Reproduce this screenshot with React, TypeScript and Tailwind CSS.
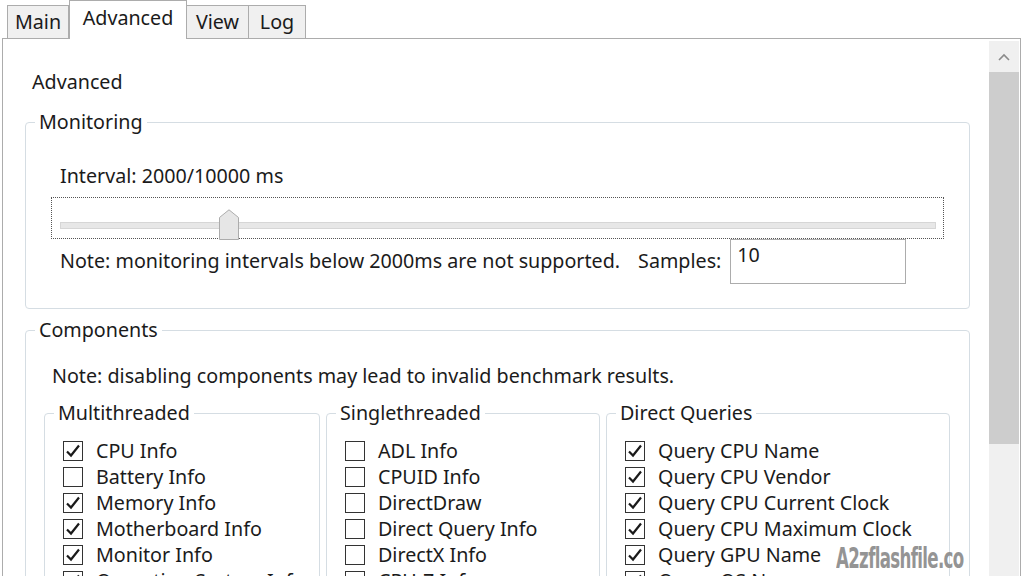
import React from "react";

const FONT = { fontFamily: '"Noto Sans", "Open Sans", "Liberation Sans", sans-serif' };

function Check({ checked }: { checked: boolean }) {
  return (
    <span className="w-[20px] h-[20px] border border-[#333333] bg-white flex items-center justify-center shrink-0">
      {checked && (
        <svg width="16" height="16" viewBox="0 0 16 16">
          <path d="M2 8.5 L6 12.5 L14 2.5" stroke="#1a1a1a" strokeWidth="2.2" fill="none" />
        </svg>
      )}
    </span>
  );
}

function Row({ label, checked }: { label: string; checked: boolean }) {
  return (
    <div className="flex items-center h-[26px] gap-[13px]">
      <Check checked={checked} />
      <span className="whitespace-nowrap">{label}</span>
    </div>
  );
}

function SubGroup({ title, width, items }: { title: string; width: string; items: [string, boolean][] }) {
  return (
    <fieldset className={`${width} border border-[#d5dde3] rounded-[4px] shrink-0`}>
      <legend className="ml-[9px] px-[4px] leading-[26px]">{title}</legend>
      <div className="pl-[18px] pt-[12px] pb-[10px]">
        {items.map(([l, c]) => (
          <Row key={l} label={l} checked={c} />
        ))}
      </div>
    </fieldset>
  );
}

export default function App() {
  return (
    <div className="w-[1024px] h-[576px] overflow-hidden bg-white relative text-[19.7px] text-[#1b1b1b]" style={FONT}>
      <div className="flex items-end h-[38px] pl-[7px] relative z-10">
        <div className="w-[62px] h-[33px] bg-[#f0f0f0] border border-[#acacac] border-b-0 flex items-center justify-center">Main</div>
        <div className="w-[118px] h-[39px] mb-[-1px] bg-white border border-[#acacac] border-b-0 flex items-center justify-center pb-[4px]">Advanced</div>
        <div className="w-[62px] h-[33px] bg-[#f0f0f0] border border-[#acacac] border-b-0 border-l-0 flex items-center justify-center">View</div>
        <div className="w-[57px] h-[33px] bg-[#f0f0f0] border border-[#acacac] border-b-0 border-l-0 flex items-center justify-center">Log</div>
      </div>
      <div className="ml-[2px] w-[1019px] h-[600px] border-l border-t border-r border-[#acacac] flex">
        <div className="flex-1 pl-[22px] pt-[29px]">
          <div className="ml-[7px] leading-[28px]">Advanced</div>
          <fieldset className="mt-[13px] w-[945px] border border-[#d5dde3] rounded-[4px]">
            <legend className="ml-[9px] px-[4px] leading-[26px]">Monitoring</legend>
            <div className="pl-[34px] pr-[25px] pb-[24px]">
              <div className="mt-[28px] leading-[26px]">Interval: 2000/10000 ms</div>
              <div className="mt-[8px] ml-[-9px] w-[893px] h-[42px] border border-dotted border-[#555555] relative">
                <div className="absolute left-[8px] right-[7px] top-[24px] h-[7px] bg-[#e7e7e7] border border-[#d6d6d6]" />
                <svg className="absolute left-[167px] top-[11px]" width="20" height="31" viewBox="0 0 20 31">
                  <path d="M0.5 30.5 L0.5 8.5 L10 0.8 L19.5 8.5 L19.5 30.5 Z" fill="#e6e6e6" stroke="#acacac" />
                </svg>
              </div>
              <div className="flex items-center h-[46px] mt-[-1px]">
                <span className="whitespace-nowrap">Note: monitoring intervals below 2000ms are not supported.</span>
                <span className="ml-[18px] whitespace-nowrap">Samples:</span>
                <div className="ml-[9px] w-[176px] h-[45px] border border-[#acacac] px-[6px] pt-[4px] leading-[22px] self-end">10</div>
              </div>
            </div>
          </fieldset>
          <fieldset className="mt-[8px] w-[945px] border border-[#d5dde3] rounded-[4px]">
            <legend className="ml-[9px] px-[4px] leading-[26px]">Components</legend>
            <div className="pl-[18px] pr-[18px] pb-[20px]">
              <div className="mt-[20px] ml-[8px] leading-[26px]">Note: disabling components may lead to invalid benchmark results.</div>
              <div className="mt-[11px] flex gap-[6px]">
                <SubGroup
                  title="Multithreaded"
                  width="w-[276px]"
                  items={[
                    ["CPU Info", true],
                    ["Battery Info", false],
                    ["Memory Info", true],
                    ["Motherboard Info", true],
                    ["Monitor Info", true],
                    ["Operating System Info", true],
                  ]}
                />
                <SubGroup
                  title="Singlethreaded"
                  width="w-[274px]"
                  items={[
                    ["ADL Info", false],
                    ["CPUID Info", false],
                    ["DirectDraw", false],
                    ["Direct Query Info", false],
                    ["DirectX Info", false],
                    ["CPU-Z Info", false],
                  ]}
                />
                <SubGroup
                  title="Direct Queries"
                  width="w-[344px]"
                  items={[
                    ["Query CPU Name", true],
                    ["Query CPU Vendor", true],
                    ["Query CPU Current Clock", true],
                    ["Query CPU Maximum Clock", true],
                    ["Query GPU Name", true],
                    ["Query OS Name", true],
                  ]}
                />
              </div>
            </div>
          </fieldset>
        </div>
        <div className="w-[30px] mt-[2px] mr-[1px] flex flex-col bg-[#f0f0f0]">
          <div className="h-[31px] flex items-center justify-center">
            <svg width="12" height="8" viewBox="0 0 12 8">
              <path d="M1 7 L6 2 L11 7" stroke="#8a8a8a" strokeWidth="1.6" fill="none" />
            </svg>
          </div>
          <div className="h-[372px] bg-[#cdcdcd]" />
        </div>
      </div>
      <div
        className="absolute left-[836px] top-[538px] text-[28px] font-bold text-[#949494] tracking-[-1px] origin-left scale-x-[0.66] whitespace-nowrap"
        style={{ fontFamily: '"DejaVu Sans Condensed", "Liberation Sans Narrow", sans-serif' }}
      >
        A2zflashfile.co
      </div>
    </div>
  );
}
